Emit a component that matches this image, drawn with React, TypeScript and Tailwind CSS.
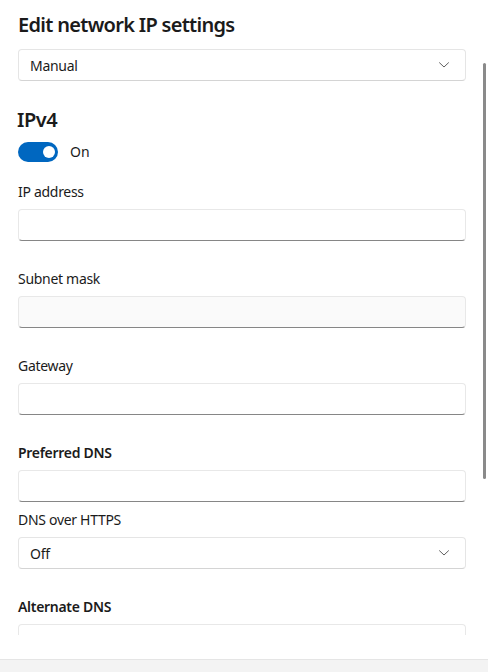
import React from 'react';

const font = { fontFamily: '"Noto Sans", "Open Sans", sans-serif' };

function Chevron() {
  return (
    <svg width="10" height="6" viewBox="0 0 10 6" fill="none" className="text-[#5f5f5f]">
      <path d="M0.5 0.75 L5 5 L9.5 0.75" stroke="currentColor" strokeWidth="1" strokeLinecap="round" strokeLinejoin="round" />
    </svg>
  );
}

function Select({ value }: { value: string }) {
  return (
    <div className="flex h-8 items-center justify-between rounded-[4px] border border-[#e5e5e5] border-b-[#d4d4d4] bg-white pl-[11px] pr-4 text-[14px] tracking-[-0.3px] text-[#1b1b1b]">
      <span>{value}</span>
      <Chevron />
    </div>
  );
}

function TextBox({ muted }: { muted?: boolean }) {
  return (
    <div
      className={`h-8 rounded-[4px] border border-[#e8e8e8] border-b-[#868686] ${
        muted ? 'bg-[#fafafa]' : 'bg-white'
      }`}
    />
  );
}

function Field({ label, bold, muted, top = 'mt-7' }: { label: string; bold?: boolean; muted?: boolean; top?: string }) {
  return (
    <div className={top}>
      <div className={`h-5 text-[14px] leading-5 tracking-[-0.3px] text-[#1b1b1b] ${bold ? 'font-semibold' : ''}`}>{label}</div>
      <div className="mt-[7px]">
        <TextBox muted={muted} />
      </div>
    </div>
  );
}

export default function App() {
  return (
    <div className="relative flex h-[672px] w-[488px] flex-col bg-white" style={font}>
      {/* Scrollable content */}
      <div className="h-[635px] overflow-hidden pl-[18px] pr-[22px] pt-[11px]">
        <h2 className="h-7 text-[20px] font-semibold leading-7 tracking-[-0.7px] text-[#1b1b1b]">Edit network IP settings</h2>
        <div className="mt-[10px]">
          <Select value="Manual" />
        </div>

        <h3 className="-ml-px mt-[25px] h-7 text-[20px] font-semibold leading-7 tracking-[-0.5px] text-[#1b1b1b]">IPv4</h3>
        <div className="mt-2 flex h-5 items-center gap-3">
          <div className="flex h-5 w-10 items-center justify-end rounded-full bg-[#0067c0] pr-[3px]">
            <div className="h-3 w-3 rounded-full bg-white" />
          </div>
          <span className="text-[14px] leading-5 text-[#1b1b1b]">On</span>
        </div>

        <Field label="IP address" top="mt-5" />
        <Field label="Subnet mask" muted />
        <Field label="Gateway" />
        <Field label="Preferred DNS" bold />

        <div className="mt-2">
          <div className="h-5 text-[14px] leading-5 tracking-[-0.3px] text-[#1b1b1b]">DNS over HTTPS</div>
          <div className="mt-[7px]">
            <Select value="Off" />
          </div>
        </div>

        <Field label="Alternate DNS" bold />
      </div>

      <div className="flex-1" />

      {/* Footer */}
      <div className="h-[13px] border-t border-[#e5e5e5] bg-[#f3f3f3]" />

      {/* Scrollbar thumb */}
      <div className="absolute right-[2px] top-[63px] h-[416px] w-[3px] rounded-full bg-[#8a8a8a]" />
    </div>
  );
}
